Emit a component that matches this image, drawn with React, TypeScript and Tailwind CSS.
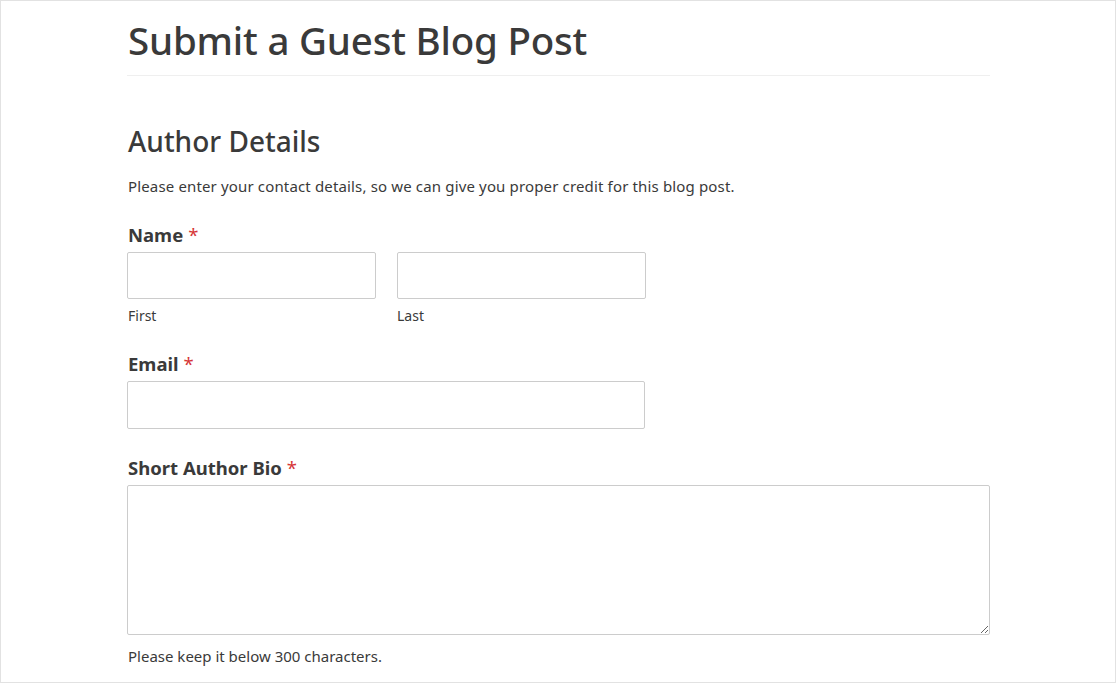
import React from "react";

const font = { fontFamily: '"Noto Sans", "Open Sans", sans-serif' };

function Req() {
  return <span className="text-[#d63637] font-normal ml-[5px]">*</span>;
}

export default function App() {
  return (
    <div className="w-[1116px] h-[683px] bg-white border border-[#e2e2e2] overflow-hidden text-[#3a3a3a]" style={font}>
      <div className="ml-[126px] w-[863px]">
        <h1 className="text-[38.5px] leading-[44px] font-medium pt-[17px] pb-[13px] border-b border-[#efefef] tracking-[-0.2px] pl-[1px]">
          Submit a Guest Blog Post
        </h1>
        <h2 className="mt-[48px] text-[28px] leading-[34px] font-medium pl-[1px]">Author Details</h2>
        <p className="mt-[18px] text-[15px] leading-[20px] tracking-[0.15px] pl-[1px]">
          Please enter your contact details, so we can give you proper credit for this blog post.
        </p>

        <div className="mt-[27px]">
          <div className="text-[18.5px] leading-[24px] font-bold pl-[1px]">
            Name<Req />
          </div>
          <div className="flex gap-[21px] mt-[5px]">
            <div className="w-[249px]">
              <input className="block w-full h-[47px] border border-[#cccccc] rounded-[2px] bg-white" />
              <div className="text-[14px] leading-[20px] mt-[7px] pl-[1px]">First</div>
            </div>
            <div className="w-[249px]">
              <input className="block w-full h-[47px] border border-[#cccccc] rounded-[2px] bg-white" />
              <div className="text-[14px] leading-[20px] mt-[7px]">Last</div>
            </div>
          </div>
        </div>

        <div className="mt-[26px]">
          <div className="text-[18.5px] leading-[24px] font-bold pl-[1px]">
            Email<Req />
          </div>
          <input className="block w-[518px] h-[48px] mt-[5px] border border-[#cccccc] rounded-[2px] bg-white" />
        </div>

        <div className="mt-[27px]">
          <div className="text-[18.5px] leading-[24px] font-bold pl-[1px]">
            Short Author Bio<Req />
          </div>
          <textarea className="block w-[863px] h-[150px] mt-[5px] border border-[#cccccc] rounded-[2px] bg-white resize" />
          <div className="text-[15px] leading-[20px] mt-[11px] pl-[1px]">Please keep it below 300 characters.</div>
        </div>
      </div>
    </div>
  );
}
